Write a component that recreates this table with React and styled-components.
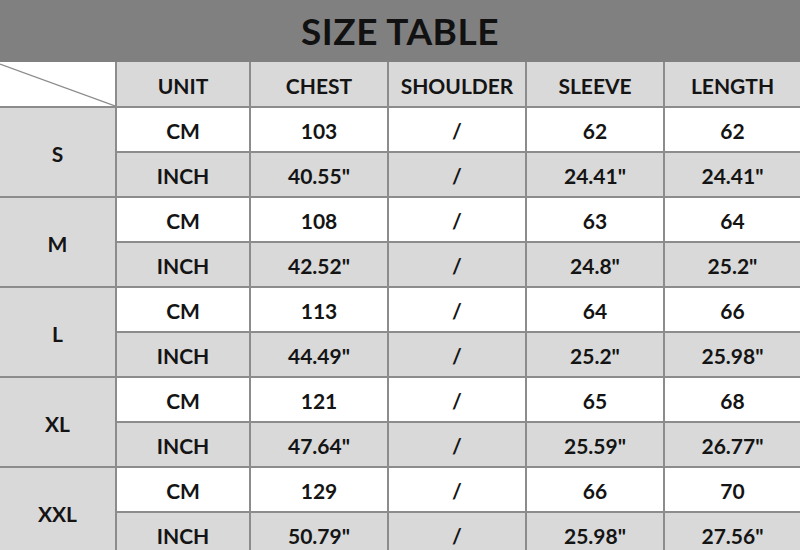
import styled, { createGlobalStyle } from "styled-components";

const GlobalStyle = createGlobalStyle`
  html, body {
    margin: 0;
    padding: 0;
    background: #ffffff;
    overflow: hidden;
  }
`;

const Page = styled.div`
  width: 800px;
  height: 550px;
  overflow: hidden;
  font-family: "Lato", "Liberation Sans", sans-serif;
  color: #111;
`;

const TitleBar = styled.div`
  height: 62px;
  background: #808080;
  display: flex;
  align-items: center;
  justify-content: center;
  font-size: 37px;
  font-weight: 700;
  color: #111;
  letter-spacing: 0.5px;
  padding-bottom: 2px;
  box-sizing: border-box;
`;

const Grid = styled.div`
  display: grid;
  grid-template-columns: 115px 132px 136px 136px 136px 135px;
  grid-template-rows: 44px repeat(10, 43px);
  gap: 2px;
  background: #8c8c8c;
`;

const Cell = styled.div`
  display: flex;
  align-items: center;
  justify-content: center;
  padding-top: 2px;
  box-sizing: border-box;
  font-size: 21px;
  font-weight: 700;
  color: #141414;
  background: ${(p) => (p.$shade ? "#d9d9d9" : "#ffffff")};
  grid-row: ${(p) => (p.$span ? `span ${p.$span}` : "auto")};
`;

const Corner = styled.div`
  background: #ffffff;
  position: relative;
  svg {
    position: absolute;
    inset: 0;
  }
`;

const headers = ["UNIT", "CHEST", "SHOULDER", "SLEEVE", "LENGTH"];

const sizes = [
  { name: "S", cm: ["103", "/", "62", "62"], inch: ['40.55"', "/", '24.41"', '24.41"'] },
  { name: "M", cm: ["108", "/", "63", "64"], inch: ['42.52"', "/", '24.8"', '25.2"'] },
  { name: "L", cm: ["113", "/", "64", "66"], inch: ['44.49"', "/", '25.2"', '25.98"'] },
  { name: "XL", cm: ["121", "/", "65", "68"], inch: ['47.64"', "/", '25.59"', '26.77"'] },
  { name: "XXL", cm: ["129", "/", "66", "70"], inch: ['50.79"', "/", '25.98"', '27.56"'] },
];

export default function App() {
  return (
    <Page>
      <GlobalStyle />
      <TitleBar>SIZE TABLE</TitleBar>
      <Grid>
        <Corner>
          <svg width="115" height="44" viewBox="0 0 115 44">
            <line x1="0" y1="2" x2="115" y2="44" stroke="#8c8c8c" strokeWidth="1.2" />
          </svg>
        </Corner>
        {headers.map((h) => (
          <Cell key={h} $shade>
            {h}
          </Cell>
        ))}
        {sizes.map((s) => [
          <Cell key={s.name} $shade $span={2}>
            {s.name}
          </Cell>,
          <Cell key={s.name + "cm"}>CM</Cell>,
          ...s.cm.map((v, i) => <Cell key={s.name + "c" + i}>{v}</Cell>),
          <Cell key={s.name + "in"} $shade>
            INCH
          </Cell>,
          ...s.inch.map((v, i) => (
            <Cell key={s.name + "i" + i} $shade>
              {v}
            </Cell>
          )),
        ])}
      </Grid>
    </Page>
  );
}
